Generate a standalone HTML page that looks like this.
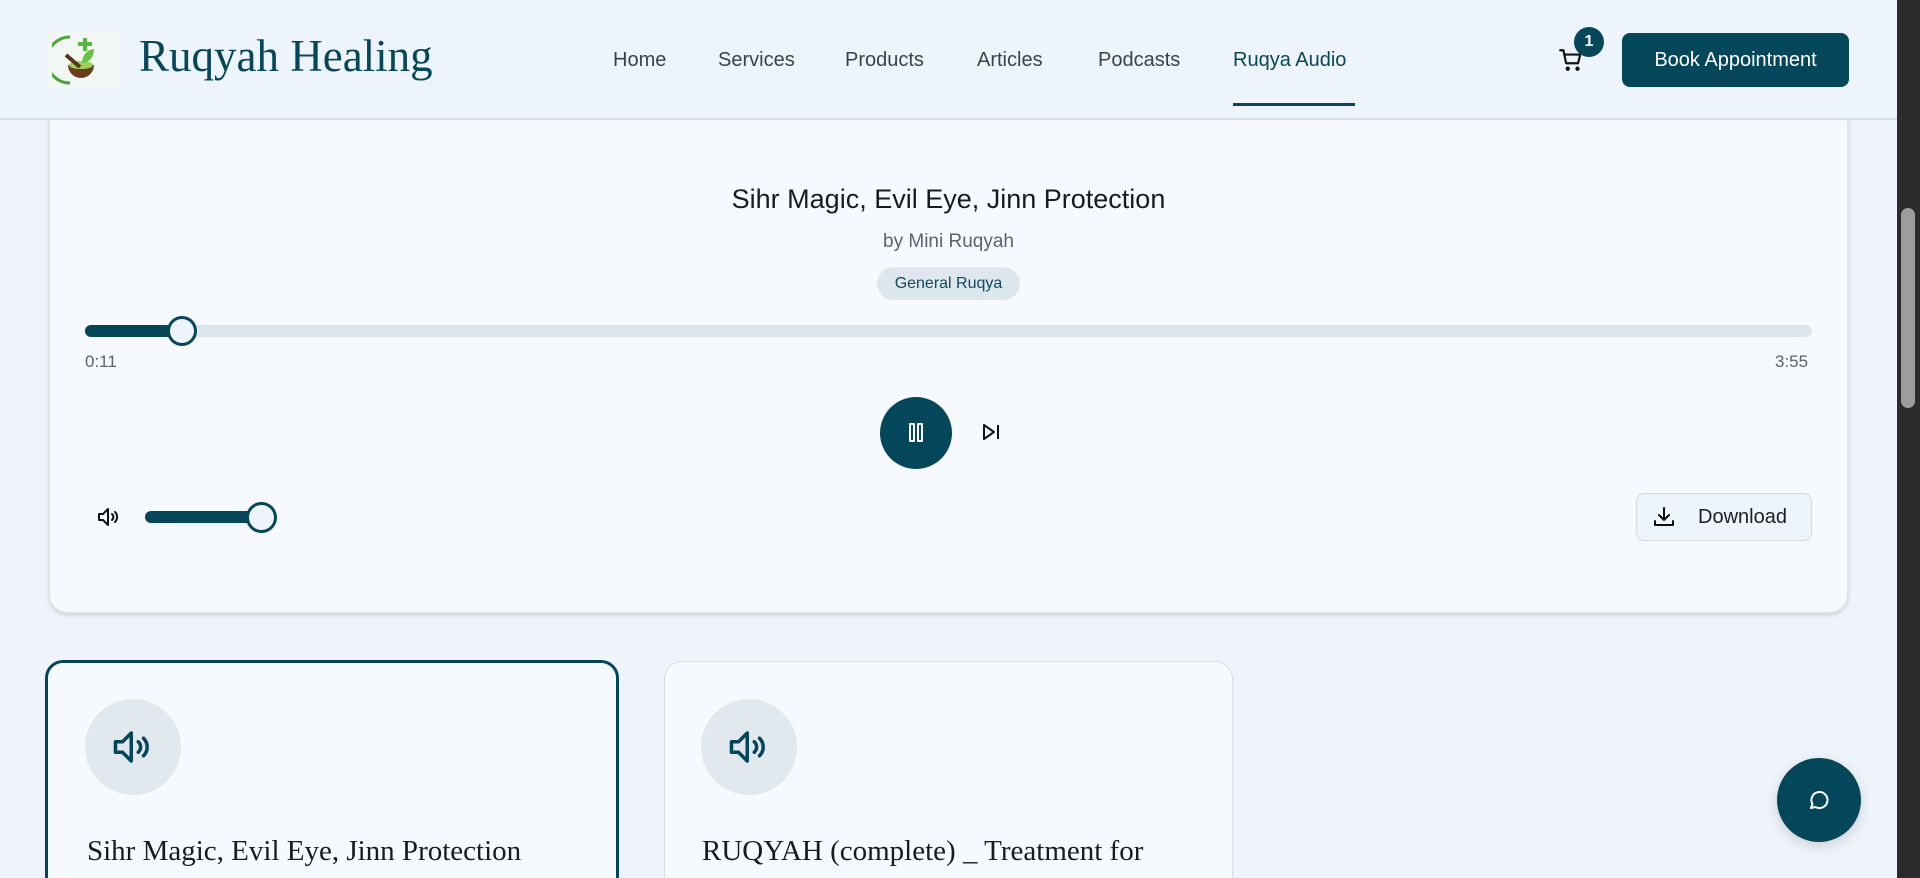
<!DOCTYPE html>
<html style="overflow:hidden;width:1920px;height:878px"><head><meta charset="utf-8"><style>
*{box-sizing:border-box;margin:0;padding:0}
body{width:1920px;height:878px;overflow:hidden;background:#eef4fa;font-family:"Liberation Sans",sans-serif;position:relative;color:#1a1f2b}
.abs{position:absolute}
header{position:absolute;left:0;top:0;width:1897px;height:120px;background:#eef4fb;border-bottom:2px solid #d6dde4;z-index:5}
.nav{position:absolute;top:49px;font-size:20px;color:#3a4150}
.serif{font-family:"Liberation Serif",serif}
.sb{position:absolute;left:1897px;top:0;width:23px;height:878px;background:#2b2b2b}
.thumb{position:absolute;left:1901px;top:208px;width:14px;height:200px;background:#9d9d9d;border-radius:7px}
.card{position:absolute;background:#f6faff;border-radius:18px}
</style></head><body>
<header>
 <div class="abs" style="left:48px;top:31px;width:72px;height:57px;background:#f3f7f3"></div>
 <svg class="abs" style="left:52px;top:33px" width="44" height="54" viewBox="0 0 44 54">
  <path d="M18 4 A22 22 0 0 0 18 50" stroke="#4aa83a" stroke-width="3" fill="none"/>
  <path d="M16 32 h26 a13 13 0 0 1 -26 0z" fill="#6b3d1e"/>
  <ellipse cx="29" cy="32" rx="12" ry="4" fill="#9bd35a"/>
  <path d="M26 9h5v-4h4v4h5v4h-5v5h-4v-5h-5z" fill="#5bb543"/>
  <path d="M30 30c0-8 6-14 12-14c0 8-5 14-12 14z" fill="#6cc04a"/>
  <path d="M14 22l14 12" stroke="#5a3418" stroke-width="4"/>
 </svg>
 <div class="abs serif" style="left:139px;top:30px;font-size:45px;color:#06485a">Ruqyah Healing</div>
 <div class="nav" style="left:613px">Home</div>
 <div class="nav" style="left:718px">Services</div>
 <div class="nav" style="left:845px">Products</div>
 <div class="nav" style="left:977px">Articles</div>
 <div class="nav" style="left:1098px">Podcasts</div>
 <div class="nav" style="left:1233px;color:#06485a">Ruqya Audio</div>
 <div class="abs" style="left:1233px;top:103px;width:122px;height:3px;background:#06485a"></div>
 <svg class="abs" style="left:1558px;top:47px" width="26" height="26" viewBox="0 0 24 24" fill="none" stroke="#111" stroke-width="2" stroke-linecap="round" stroke-linejoin="round"><path d="M2 3h3l2.5 12h11l2-8H6"/><circle cx="9" cy="20" r="1" fill="#111"/><circle cx="18" cy="20" r="1" fill="#111"/></svg>
 <div class="abs" style="left:1574px;top:27px;width:30px;height:30px;border-radius:50%;background:#06485a;color:#fff;font-weight:bold;font-size:16px;text-align:center;line-height:30px">1</div>
 <div class="abs" style="left:1622px;top:33px;width:227px;height:54px;border-radius:8px;background:#04465a;color:#fff;font-size:20px;text-align:center;line-height:54px">Book Appointment</div>
</header>

<div class="card" style="left:49px;top:80px;width:1799px;height:533px;box-shadow:0 2px 5px rgba(0,0,0,.15);border:1px solid #dfe5eb"></div>
<div class="abs" style="left:0;top:184px;width:1897px;text-align:center;font-size:27px;color:#161b26">Sihr Magic, Evil Eye, Jinn Protection</div>
<div class="abs" style="left:0;top:231px;width:1897px;text-align:center;font-size:19px;color:#5b6270">by Mini Ruqyah</div>
<div class="abs" style="left:877px;top:267px;width:143px;height:33px;border-radius:17px;background:#dfe7ee;color:#0e4a5c;font-size:16px;text-align:center;line-height:33px">General Ruqya</div>
<div class="abs" style="left:85px;top:325px;width:1727px;height:12px;border-radius:6px;background:#dfe5ec"></div>
<div class="abs" style="left:85px;top:325px;width:100px;height:12px;border-radius:6px;background:#04465a"></div>
<div class="abs" style="left:167px;top:316px;width:30px;height:30px;border-radius:50%;background:#eef4fb;border:3px solid #04465a"></div>
<div class="abs" style="left:85px;top:352px;font-size:17px;color:#5b6270">0:11</div>
<div class="abs" style="left:1775px;top:352px;font-size:17px;color:#5b6270">3:55</div>
<div class="abs" style="left:880px;top:397px;width:72px;height:72px;border-radius:50%;background:#04465a"></div>
<div class="abs" style="left:909px;top:423px;width:6px;height:19px;border:2px solid #fff;border-radius:1px"></div>
<div class="abs" style="left:917px;top:423px;width:6px;height:19px;border:2px solid #fff;border-radius:1px"></div>
<svg class="abs" style="left:981px;top:422px" width="20" height="20" viewBox="0 0 20 20" fill="none" stroke="#111" stroke-width="2" stroke-linejoin="round"><path d="M3 3l10 7-10 7z"/><path d="M17 3v14"/></svg>
<svg class="abs" style="left:96px;top:505px" width="26" height="24" viewBox="0 0 24 24" fill="none" stroke="#111" stroke-width="2" stroke-linecap="round" stroke-linejoin="round"><path d="M11 4L6 9H2v6h4l5 5z"/><path d="M15 9a4 4 0 0 1 0 6"/><path d="M18 7a7 7 0 0 1 0 10"/></svg>
<div class="abs" style="left:145px;top:511px;width:117px;height:12px;border-radius:6px;background:#04465a"></div>
<div class="abs" style="left:246px;top:502px;width:31px;height:31px;border-radius:50%;background:#eef4fb;border:3px solid #04465a"></div>
<div class="abs" style="left:1636px;top:493px;width:176px;height:48px;border-radius:8px;background:#eef4fb;border:1px solid #d3d9df"></div>
<svg class="abs" style="left:1652px;top:505px" width="24" height="24" viewBox="0 0 24 24" fill="none" stroke="#111" stroke-width="2" stroke-linecap="round" stroke-linejoin="round"><path d="M12 3v12M7 10l5 5 5-5M3 16v4h18v-4"/></svg>
<div class="abs" style="left:1698px;top:506px;font-size:20px;color:#1a1f2b">Download</div>

<div class="card" style="left:45px;top:660px;width:574px;height:240px;border:3px solid #04465a"></div>
<div class="card" style="left:664px;top:661px;width:569px;height:240px;border:1px solid #d8dee4"></div>
<div class="abs" style="left:85px;top:699px;width:96px;height:96px;border-radius:50%;background:#e1e8ee"></div>
<div class="abs" style="left:701px;top:699px;width:96px;height:96px;border-radius:50%;background:#e1e8ee"></div>
<svg class="abs" style="left:110px;top:726px" width="46" height="42" viewBox="0 0 24 24" fill="none" stroke="#04465a" stroke-width="2" stroke-linecap="round" stroke-linejoin="round"><path d="M11 4L6 9H2v6h4l5 5z"/><path d="M15 9a4 4 0 0 1 0 6"/><path d="M18 7a7 7 0 0 1 0 10"/></svg>
<svg class="abs" style="left:726px;top:726px" width="46" height="42" viewBox="0 0 24 24" fill="none" stroke="#04465a" stroke-width="2" stroke-linecap="round" stroke-linejoin="round"><path d="M11 4L6 9H2v6h4l5 5z"/><path d="M15 9a4 4 0 0 1 0 6"/><path d="M18 7a7 7 0 0 1 0 10"/></svg>
<div class="abs serif" style="left:87px;top:835px;font-size:29px;color:#161b26;white-space:nowrap">Sihr Magic, Evil Eye, Jinn Protection</div>
<div class="abs serif" style="left:702px;top:835px;font-size:29px;color:#161b26;white-space:nowrap">RUQYAH (complete) _ Treatment for</div>

<div class="abs" style="left:1777px;top:758px;width:84px;height:84px;border-radius:50%;background:#04465a;box-shadow:0 4px 12px rgba(0,0,0,.15)"></div>
<svg class="abs" style="left:1807px;top:788px" width="24" height="24" viewBox="0 0 24 24" fill="none" stroke="#fff" stroke-width="2" stroke-linejoin="round"><path d="M4 20l1.5-4A8 8 0 1 1 8.5 19z"/></svg>
<div class="sb"></div><div class="thumb"></div>
</body></html>
